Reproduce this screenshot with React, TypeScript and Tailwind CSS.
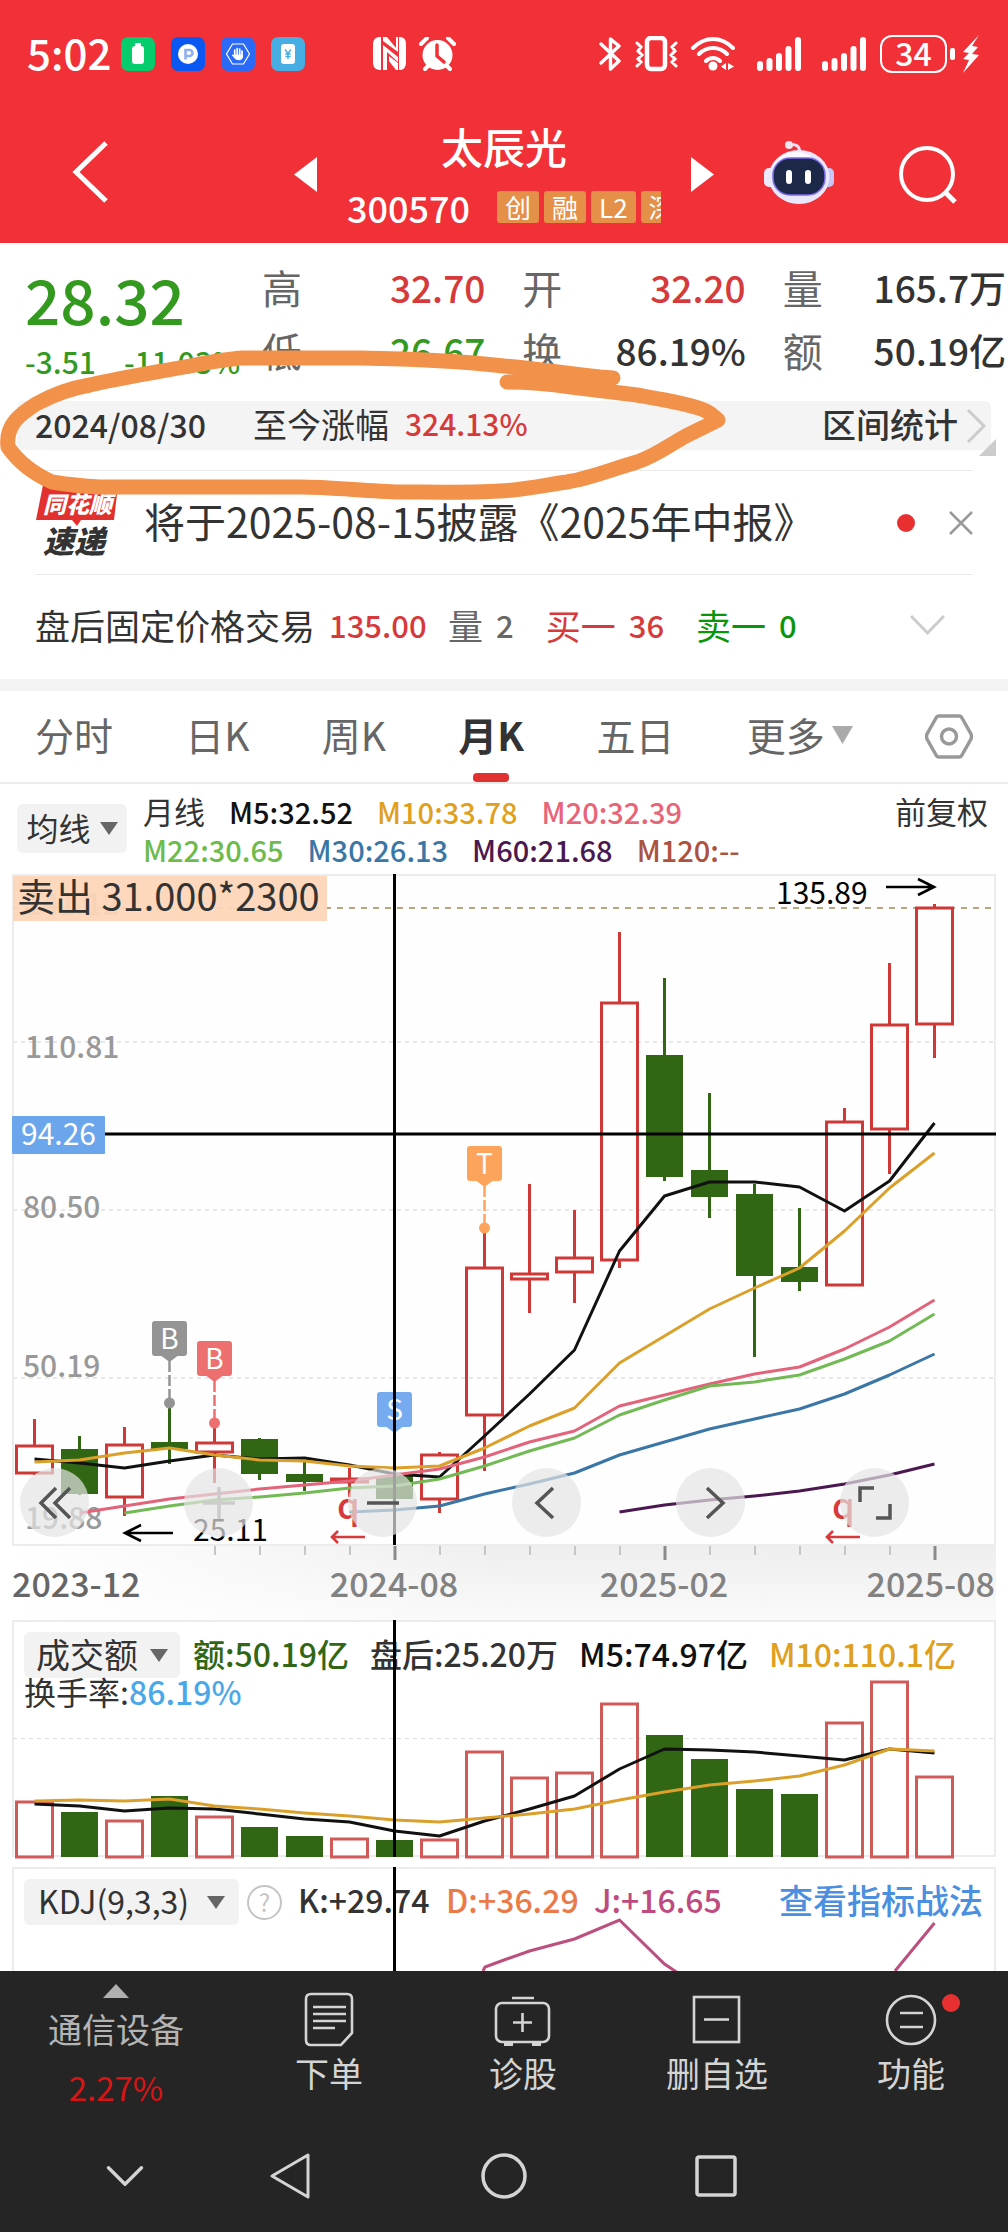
import type { ReactNode } from "react";
import { ChevronDown } from "lucide-react";

const RED = "#ce3836";
const GREEN = "#306614";
const STEP = 45;
const cx = (i: number) => 34.5 + i * STEP;

interface Candle {
  up: boolean;
  high: number;
  top: number;
  bottom: number;
  low: number;
  vol: number;
}

// up, high, body top, body bottom, low, volume top
const rows: [number, number, number, number, number, number][] = [
  [1, 1419, 1446, 1473, 1475, 1802],
  [0, 1436, 1449, 1494, 1495, 1812],
  [1, 1427, 1445, 1497, 1516, 1821],
  [0, 1403, 1442, 1449, 1464, 1796],
  [1, 1423, 1443, 1452, 1483, 1817],
  [0, 1438, 1439, 1474, 1480, 1827],
  [0, 1462, 1474, 1482, 1491, 1836],
  [1, 1468, 1479, 1482, 1497, 1839],
  [0, 1474, 1476, 1499, 1499, 1840],
  [1, 1452, 1455, 1499, 1513, 1840],
  [1, 1228, 1268, 1415, 1471, 1752],
  [1, 1184, 1274, 1279, 1313, 1778],
  [1, 1210, 1258, 1272, 1303, 1773],
  [1, 932, 1003, 1260, 1268, 1704],
  [0, 978, 1055, 1177, 1181, 1735],
  [0, 1093, 1170, 1197, 1218, 1759],
  [0, 1184, 1194, 1276, 1357, 1789],
  [0, 1208, 1267, 1282, 1291, 1794],
  [1, 1108, 1122, 1285, 1285, 1723],
  [1, 963, 1025, 1129, 1174, 1682],
  [1, 904, 908, 1024, 1058, 1777],
];

const candles: Candle[] = rows.map(([up, high, top, bottom, low, vol]) => ({
  up: up === 1,
  high,
  top,
  bottom,
  low,
  vol,
}));

const averages = [
  { color: "#111111", from: 0, ys: [1459, 1463, 1468, 1461, 1455, 1459, 1458, 1465, 1474, 1477, 1436, 1394, 1350, 1251, 1196, 1182, 1182, 1187, 1211, 1181, 1123] },
  { color: "#dba02a", from: 0, ys: [1462, 1460, 1453, 1448, 1455, 1460, 1461, 1466, 1468, 1466, 1448, 1426, 1408, 1363, 1336, 1309, 1288, 1268, 1231, 1188, 1153] },
  { color: "#e2637a", from: 1, ys: [1513, 1506, 1499, 1494, 1489, 1485, 1481, 1475, 1469, 1457, 1442, 1431, 1406, 1395, 1384, 1374, 1367, 1349, 1327, 1300] },
  { color: "#73b955", from: 2, ys: [1513, 1506, 1500, 1497, 1493, 1488, 1486, 1479, 1466, 1451, 1438, 1415, 1400, 1386, 1382, 1375, 1359, 1341, 1314] },
  { color: "#3a76a6", from: 7, ys: [1512, 1510, 1506, 1494, 1484, 1473, 1455, 1442, 1429, 1419, 1409, 1394, 1375, 1354] },
  { color: "#4b1850", from: 13, ys: [1512, 1505, 1500, 1496, 1491, 1484, 1475, 1464] },
];

const volumeAverages = [
  { color: "#111111", from: 0, ys: [1804, 1806, 1811, 1808, 1809, 1814, 1819, 1822, 1831, 1836, 1821, 1809, 1796, 1769, 1749, 1750, 1752, 1756, 1760, 1749, 1753] },
  { color: "#dba02a", from: 0, ys: [1801, 1800, 1801, 1799, 1806, 1809, 1813, 1816, 1820, 1822, 1818, 1814, 1809, 1800, 1792, 1785, 1781, 1776, 1765, 1749, 1751] },
];

const markers = [
  { letter: "B", i: 3, y: 1321, dot: 1403, color: "#949494" },
  { letter: "B", i: 4, y: 1341, dot: 1423, color: "#ee6f6f" },
  { letter: "T", i: 10, y: 1146, dot: 1228, color: "#fda45c" },
  { letter: "S", i: 8, y: 1392, dot: 0, color: "#76abf0" },
];

function Lines({ series }: { series: typeof averages }) {
  return (
    <>
      {series.map((s) => (
        <polyline
          key={s.color}
          points={s.ys.map((y, k) => `${cx(s.from + k)},${y}`).join(" ")}
          fill="none"
          stroke={s.color}
          strokeWidth="3"
          strokeLinejoin="round"
        />
      ))}
    </>
  );
}

function StatusBar() {
  return (
    <div className="flex h-[108px] items-center pr-7 pl-[27px]">
      <span className="w-[94px] pb-1 text-[42px] leading-none font-medium">5:02</span>
      <div className="flex gap-4">
        <svg width="34" height="34" viewBox="0 0 34 34">
          <rect width="34" height="34" rx="7" fill="#05cc6d" />
          <rect x="14" y="6" width="6" height="3" rx="1" fill="#fff" />
          <rect x="11" y="9" width="12" height="18" rx="3" fill="#fff" />
        </svg>
        <svg width="34" height="34" viewBox="0 0 34 34">
          <rect width="34" height="34" rx="7" fill="#0a57f2" />
          <circle cx="17" cy="17" r="10" fill="#fff" />
          <path d="M14.5 22.5V13h4a3 3 0 0 1 0 6h-4" fill="none" stroke="#8fb0ef" strokeWidth="2.6" />
        </svg>
        <svg width="34" height="34" viewBox="0 0 34 34">
          <rect width="34" height="34" rx="7" fill="#2b6af6" />
          <path d="M11.500 7h11l6 10-6 10h-11l-6-10z" fill="none" stroke="#fff" strokeWidth="1.2" />
          <path d="M13.700 20V13M16.200 19V11.500M18.700 19V12M21 20V14" stroke="#fff" strokeWidth="1.700" strokeLinecap="round" />
          <path d="M13 17.500h8.800v2.500c0 2-1.500 3.200-3.800 3.200s-3.500-.7-4.500-2l-2.700-3c.4-.9 1.300-.8 2.200 0z" fill="#fff" />
        </svg>
        <svg width="34" height="34" viewBox="0 0 34 34">
          <rect width="34" height="34" rx="7" fill="#47aee3" />
          <rect x="10" y="7" width="14" height="20" rx="3" fill="#fff" />
          <path d="M14 12.500l3 4 3-4M17 16.500V22M14.300 17h5.400M14.300 19.500h5.400" fill="none" stroke="#47aee3" strokeWidth="1.400" />
        </svg>
      </div>
      <svg className="ml-[68px]" width="34" height="34" viewBox="0 0 34 34" fill="#fff">
        <path d="M7 0h1v33c-5 0-8-2-8-8V8C0 2 3 0 7 0zM27 33h-1V0c5 0 7 2 7 8v17c0 6-3 8-6 8z" />
        <path d="M10 0h4l9 11V0h2v15L10 4zM10 8l15 12v5L14 15v18h-4zM16 19l9 7v7h-2l-7-9z" />
      </svg>
      <svg className="ml-3" width="37" height="35" viewBox="0 0 37 35">
        <circle cx="18.500" cy="18" r="15" fill="#fff" />
        <path d="M2 7l6-6M35 7l-6-6M6 32l4-4M31 32l-4-4" stroke="#fff" strokeWidth="4" strokeLinecap="round" />
        <path d="M18 8v11l7 6" fill="none" stroke="#f13038" strokeWidth="3.500" strokeLinecap="round" />
      </svg>

      <svg className="ml-auto" width="22" height="36" viewBox="0 0 22 36" fill="none" stroke="#fff" strokeWidth="3.400" strokeLinejoin="round" strokeLinecap="round">
        <path d="M2 8l18 17-8.500 8V3L20 10 2 27" />
      </svg>
      <svg className="ml-[14px]" width="43" height="36" viewBox="0 0 43 36" fill="none" stroke="#fff" strokeLinecap="round">
        <rect x="12" y="2" width="18" height="31" rx="4" strokeWidth="4.500" />
        <path d="M2 7l4 4-3 4 4 4-4 4 3 3-4 4M41 7l-4 4 3 4-4 4 4 4-3 3 4 4" strokeWidth="3" />
      </svg>
      <svg className="ml-[13px]" width="45" height="36" viewBox="0 0 45 36" fill="none" stroke="#fff" strokeWidth="4" strokeLinecap="round">
        <path d="M2 12c12-12 28-12 40 0M8 18c8-8 20-8 28 0M15 25c4-4 10-4 14 0" />
        <circle cx="22" cy="30" r="4.500" fill="#fff" stroke="none" />
        <path d="M35 27v7l-5-3.500zM37 27v7l6-3.500z" fill="#fff" stroke="none" />
      </svg>
      {[0, 1].map((n) => (
        <svg key={n} className="ml-[21px]" width="44" height="36" viewBox="0 0 44 36" stroke="#fff" strokeWidth="6" strokeLinecap="round">
          <path d="M3 28v4M12.500 25v7M22 20v12M31.500 13v19M41 4v28" />
        </svg>
      ))}
      <div className="ml-[14px] flex h-[38px] w-[67px] items-center justify-center rounded-xl border-2 border-white pb-1 text-[32px] leading-none font-medium">
        34
      </div>
      <svg className="ml-[2px]" width="31" height="38" viewBox="0 0 31 38" fill="#fff">
        <rect x="1" y="13" width="5" height="12" rx="2" />
        <path d="M30 0L14 17l6 1-6 6 6 1-6 13 16-18-7-1 6-7-6-1z" />
      </svg>
    </div>
  );
}

function Robot() {
  return (
    <svg width="70" height="64" viewBox="0 0 70 64">
      <path d="M24 5q12-3 12 9" fill="none" stroke="#e9dff5" strokeWidth="3" />
      <circle cx="25" cy="5" r="4" fill="#f3e6f2" />
      <rect x="0" y="28" width="12" height="19" rx="5" fill="#efeafa" />
      <rect x="58" y="28" width="12" height="19" rx="5" fill="#c9c5f5" />
      <ellipse cx="35" cy="37" rx="30.500" ry="27" fill="#e9e7fb" />
      <ellipse cx="32" cy="29" rx="23" ry="17" fill="#fbf7ff" />
      <rect x="9" y="18" width="52" height="37" rx="17" fill="#1c2848" stroke="#7d6bea" strokeWidth="1.500" />
      <rect x="22" y="30" width="6" height="14" rx="3" fill="#fff" />
      <rect x="41" y="30" width="6" height="14" rx="3" fill="#fff" />
    </svg>
  );
}

function TitleBar() {
  return (
    <div className="flex items-center pt-[7px] pb-[6px]">
      <button aria-label="返回" className="mb-2 ml-[72px]">
        <svg width="36" height="62" viewBox="0 0 36 62" fill="none" stroke="#fff" strokeWidth="5">
          <path d="M34 2L4 31l30 29" />
        </svg>
      </button>
      <button aria-label="上一只" className="mb-1 ml-[186px]">
        <svg width="23" height="35" viewBox="0 0 23 35" fill="#fff">
          <path d="M23 0v35L0 17.500z" />
        </svg>
      </button>
      <div className="flex flex-1 flex-col items-center">
        <h1 className="text-[42px] leading-[62px] font-medium">太辰光</h1>
        <div className="flex w-[314px] items-center overflow-hidden">
          <span className="w-[150px] shrink-0 text-[36px] leading-[60px] font-medium">300570</span>
          <div className="flex shrink-0 gap-[5px] text-[26px] leading-8">
            {["创", "融", "L2", "深"].map((tag) => (
              <span key={tag} className="rounded-[3px] bg-[#e59048] px-2">
                {tag}
              </span>
            ))}
          </div>
        </div>
      </div>
      <button aria-label="下一只" className="mb-1">
        <svg width="23" height="35" viewBox="0 0 23 35" fill="#fff">
          <path d="M0 0v35l23-17.500z" />
        </svg>
      </button>
      <button aria-label="智能助手" className="mb-2 ml-[50px]">
        <Robot />
      </button>
      <button aria-label="搜索" className="mr-[50px] mb-1 ml-16">
        <svg width="60" height="60" viewBox="0 0 60 60" fill="none" stroke="#fff" strokeWidth="4">
          <circle cx="29" cy="30" r="26" />
          <path d="M47 48l10 10" strokeWidth="5" />
        </svg>
      </button>
    </div>
  );
}

const stats = [
  { label: "高", value: "32.70", tone: "text-[#d63a3a]" },
  { label: "开", value: "32.20", tone: "text-[#d63a3a]" },
  { label: "量", value: "165.7万", tone: "text-[#333333]" },
  { label: "低", value: "26.67", tone: "text-[#339a1f]" },
  { label: "换", value: "86.19%", tone: "text-[#333333]" },
  { label: "额", value: "50.19亿", tone: "text-[#333333]" },
];

function Quote() {
  return (
    <section className="relative pt-[13px]">
      <div className="flex">
        <div className="w-[262px] shrink-0 pl-[25px] font-medium text-[#339a1f]">
          <div className="text-[62px] leading-[84px]">28.32</div>
          <div className="flex gap-7 text-[30px] leading-[42px] whitespace-nowrap">
            <span>-3.51</span>
            <span>-11.03%</span>
          </div>
        </div>
        <dl className="grid flex-1 grid-cols-3 gap-x-[37px] pr-[2px]">
          {stats.map((s) => (
            <div key={s.label} className="flex justify-between leading-[63px] whitespace-nowrap">
              <dt className="text-[40px] text-[#666666]">{s.label}</dt>
              <dd className={`text-[37px] font-medium ${s.tone}`}>{s.value}</dd>
            </div>
          ))}
        </dl>
      </div>

      <div className="relative mt-[19px] mr-[17px] ml-[17px] flex h-[49px] items-center rounded-md bg-[#f4f4f4] pr-1 pb-1 pl-[18px] text-[#333333]">
        <span className="w-[218px] text-[32px] font-medium">2024/08/30</span>
        <span className="text-[34px]">至今涨幅</span>
        <span className="ml-4 text-[30px] font-medium text-[#d63a3a]">324.13%</span>
        <button className="ml-auto flex items-center gap-2 text-[34px] font-medium">
          区间统计
          <svg className="mt-1" width="21" height="36" viewBox="0 0 21 36" fill="none" stroke="#cccccc" strokeWidth="3">
            <path d="M2 2l16 16L2 34" />
          </svg>
        </button>
        <svg className="absolute right-[-5px] -bottom-[6px]" width="17" height="17" viewBox="0 0 17 17" fill="#cccccc">
          <path d="M17 0v17H0z" />
        </svg>
      </div>

      {/* Hand-drawn highlight */}
      <svg className="pointer-events-none absolute top-0 left-0 z-10 w-full overflow-visible" viewBox="0 243 1008 260" fill="none" stroke="#f2924a" strokeWidth="15" strokeLinecap="round" strokeLinejoin="round">
        <path d="M507 382C530 382 550 384 571 387L637 395C665 400 695 405 706 411C714 415 716 419 718 420C705 427 695 431 684 437C668 446 655 456 637 462C612 469 592 478 567 482C545 485 524 490 500 491C466 493 430 492 400 492C365 491 330 487 300 487L100 487C80 486 70 485 52 482C32 473 17 460 8 447C5 424 22 413 36 404C56 393 72 388 90 385C124 377 158 372 190 366C210 362 226 359 243 358L360 358C420 359 460 361 504 366C540 369 570 374 600 377L613 378" />
      </svg>
    </section>
  );
}

function News() {
  return (
    <section className="mx-[35px] mt-5 flex h-[105px] items-center border-y border-[#ebebeb]">
      <svg width="84" height="76" viewBox="0 0 84 76" fontFamily='"Noto Sans CJK SC", sans-serif' fontWeight="900" fontStyle="italic">
        <path d="M8 0h75l-4 35H46l-4 6-5-6H1z" fill="#e2302f" />
        <text x="8" y="28" fontSize="23" fill="#fff">同花顺</text>
        <text x="8" y="68" fontSize="31" fill="#333">速递</text>
      </svg>
      <a href="#news" className="mb-1 ml-[25px] text-[41px] whitespace-nowrap text-[#333333]">
        将于2025-08-15披露《2025年中报》
      </a>
      <span className="ml-auto h-[18px] w-[18px] rounded-full bg-[#e83030]" />
      <button aria-label="关闭" className="ml-[34px]">
        <svg width="24" height="24" viewBox="0 0 24 24" fill="none" stroke="#999999" strokeWidth="2.500">
          <path d="M1 1l22 22M23 1L1 23" />
        </svg>
      </button>
    </section>
  );
}

function AfterHours() {
  return (
    <section className="flex h-[104px] items-center pr-[63px] pb-1 pl-[35px] text-[35px] whitespace-nowrap">
      <span className="text-[#333333]">盘后固定价格交易</span>
      <span className="ml-[14px] w-[119px] text-[31px] font-medium text-[#d63a3a]">135.00</span>
      <span className="flex items-center gap-[13px] text-[#666666]">
        量<span className="text-[31px] font-medium">2</span>
      </span>
      <span className="ml-8 flex items-center gap-[13px] text-[#d63a3a]">
        买一<span className="text-[31px] font-medium">36</span>
      </span>
      <span className="ml-8 flex items-center gap-[13px] text-[#0a960a]">
        卖一<span className="text-[31px] font-medium">0</span>
      </span>
      <button aria-label="展开" className="ml-auto">
        <svg width="35" height="20" viewBox="0 0 35 20" fill="none" stroke="#cccccc" strokeWidth="3">
          <path d="M1 1l16.500 17L34 1" />
        </svg>
      </button>
    </section>
  );
}

function Triangle({ color }: { color: string }) {
  return (
    <svg className="mt-1" width="18" height="13" viewBox="0 0 18 13" fill={color}>
      <path d="M0 0h18l-9 13z" />
    </svg>
  );
}

function PeriodTabs() {
  return (
    <nav className="flex h-[93px] items-center justify-between border-b-2 border-[#ebebeb] px-[35px] text-[39px] text-[#666666]">
      {["分时", "日K", "周K", "月K", "五日"].map((tab) => (
        <button
          key={tab}
          className={
            tab === "月K"
              ? "relative h-full pb-1 font-bold text-[#333333]"
              : "h-full pb-1"
          }
        >
          {tab}
          {tab === "月K" && (
            <span className="absolute bottom-0 left-1/2 h-[9px] w-9 -translate-x-1/2 rounded bg-[#e03030]" />
          )}
        </button>
      ))}
      <button className="flex items-center gap-[7px] pb-1">
        更多
        <svg width="21" height="18" viewBox="0 0 21 18" fill="#aaaaaa">
          <path d="M0 0h21L10.500 18z" />
        </svg>
      </button>
      <button aria-label="设置">
        <svg width="48" height="45" viewBox="0 0 48 45" fill="none" stroke="#999999" strokeWidth="3.500" strokeLinejoin="round">
          <path d="M14 2h20q2 0 3 2l9 16q1 2.500 0 5l-9 16q-1 2-3 2H14q-2 0-3-2L2 25q-1-2.500 0-5l9-16q1-2 3-2z" />
          <circle cx="24" cy="22.500" r="7.500" />
        </svg>
      </button>
    </nav>
  );
}

function MovingAverages() {
  return (
    <section className="flex h-[90px] items-start pt-2 pr-5 pl-[17px] whitespace-nowrap">
      <button className="mt-3 flex h-[49px] w-[110px] items-center justify-center gap-[9px] rounded-md bg-[#f2f2f2] pb-1 text-[32px] text-[#333333]">
        均线
        <Triangle color="#666666" />
      </button>
      <div className="ml-4 text-[29px] leading-[38px] font-medium">
        <div className="flex gap-6">
          <span className="text-[31px] font-normal text-[#333333]">月线</span>
          <span className="text-[#111111]">M5:32.52</span>
          <span className="text-[#dfa020]">M10:33.78</span>
          <span className="text-[#e86478]">M20:32.39</span>
        </div>
        <div className="flex gap-6">
          <span className="text-[#6dbb4c]">M22:30.65</span>
          <span className="text-[#3a76a6]">M30:26.13</span>
          <span className="text-[#4b1850]">M60:21.68</span>
          <span className="text-[#ad5140]">M120:--</span>
        </div>
      </div>
      <button className="ml-auto text-[31px] leading-[38px] text-[#333333]">前复权</button>
    </section>
  );
}

function Dividend({ x }: { x: number }) {
  return (
    <g>
      <text x={x} y="1519" fontSize="36" fontWeight="500" fill="#d8393a">q</text>
      <path d={`M${x + 28} 1537h-33M${x + 1} 1531l-6 6 6 6`} fill="none" stroke="#d8393a" strokeWidth="2.600" />
    </g>
  );
}

function ToolButton({ label, faded, children }: { label: string; faded?: boolean; children: ReactNode }) {
  return (
    <button aria-label={label} className="flex h-[69px] w-[69px] items-center justify-center rounded-full bg-[#e4e4e4]/70">
      <svg width="34" height="34" viewBox="0 0 34 34" fill="none" stroke={faded ? "#cccccc" : "#555555"} strokeWidth="3.500">
        {children}
      </svg>
    </button>
  );
}

function MainChart() {
  return (
    <section className="relative">
      <svg className="block w-full" viewBox="0 874 1008 746" fontFamily='"Noto Sans CJK SC", sans-serif'>
        <defs>
          <linearGradient id="axis" x1="0" y1="0" x2="0" y2="1">
            <stop offset="0" stopColor="#eeeeee" />
            <stop offset="1" stopColor="#fafafa" />
          </linearGradient>
          <linearGradient id="fade" x1="0" y1="0" x2="1" y2="0">
            <stop offset="0" stopColor="#ffffff" />
            <stop offset="0.500" stopColor="#ffffff" stopOpacity="0" />
          </linearGradient>
        </defs>
        <rect x="12" y="1545" width="984" height="76" fill="url(#axis)" />
        <rect x="12" y="1545" width="984" height="76" fill="url(#fade)" />
        <rect x="13" y="875" width="982" height="670" fill="#fefefe" stroke="#ececec" strokeWidth="2" />

        {[1042, 1210, 1378].map((y) => (
          <path key={y} d={`M13 ${y}H994`} stroke="#e8e8e8" strokeWidth="2" strokeDasharray="4 4" />
        ))}
        <path d="M13 908H994" stroke="#b9a57f" strokeWidth="2" strokeDasharray="6 6" />

        <g fontSize="30" fontWeight="500" fill="#999999">
          <text x="25" y="1058">110.81</text>
          <text x="23" y="1218">80.50</text>
          <text x="23" y="1377">50.19</text>
          <text x="25" y="1529">19.88</text>
          <text x="25" y="915">141.12</text>
        </g>

        {candles.map((c, i) => {
          const color = c.up ? RED : GREEN;
          return (
            <g key={i}>
              <path d={`M${cx(i)} ${c.high}V${c.top}M${cx(i)} ${c.bottom}V${c.low}`} stroke={color} strokeWidth="3" />
              {c.up ? (
                <rect x={cx(i) - 18} y={c.top} width="36" height={c.bottom - c.top} fill="none" stroke={color} strokeWidth="3" />
              ) : (
                <rect x={cx(i) - 18.5} y={c.top} width="37" height={c.bottom - c.top} fill={color} />
              )}
            </g>
          );
        })}

        <Lines series={averages} />

        {/* Trade markers */}
        {markers.map((m) => (
          <g key={`${m.letter}${m.i}`}>
            {m.dot > 0 && (
              <>
                <path d={`M${cx(m.i)} ${m.y + 40}V${m.dot}`} stroke={m.color} strokeWidth="2.500" strokeDasharray="11 3" />
                <circle cx={cx(m.i)} cy={m.dot} r="5.500" fill={m.color} />
              </>
            )}
            <rect x={cx(m.i) - 17.5} y={m.y} width="35" height="35" rx="3" fill={m.color} />
            <path d={`M${cx(m.i) - 8} ${m.y + 35}h16l-8 6z`} fill={m.color} />
            <text x={cx(m.i)} y={m.y + 28} fontSize="28" textAnchor="middle" fill="#fff">{m.letter}</text>
          </g>
        ))}
        <Dividend x={337} />
        <Dividend x={832} />

        <path d="M394.500 874V1545M12 1134H996" stroke="#000" strokeWidth="3" />

        <rect x="13" y="876" width="314" height="45" fill="#fdd6b8" fillOpacity="0.940" />
        <text x="17" y="911" fontSize="38" fill="#333">卖出 31.000*2300</text>
        <rect x="12" y="1116" width="93" height="38" rx="1" fill="#6ba5ec" />
        <text x="21" y="1145" fontSize="30" fill="#fff">94.26</text>

        <g fontSize="30" fill="#000">
          <text x="776" y="904">135.89</text>
          <text x="193" y="1541">25.11</text>
        </g>
        <path d="M886 887H934M918 879l16 8-16 8M173 1533H125M141 1525l-16 8 16 8" fill="none" stroke="#000" strokeWidth="2.600" />

        {/* Date axis */}
        {candles.map((_, i) => {
          if (i < 4) return null;
          const major = i % 6 === 2;
          return (
            <path
              key={i}
              d={`M${cx(i) + 0.5} 1546v${major ? 14 : 9}`}
              stroke={major ? "#8a8a8a" : "#c6c6c6"}
              strokeWidth={major ? 3 : 2}
            />
          );
        })}
        <g fontSize="34" fontWeight="500" fill="#828282">
          <text x="12" y="1597" fill="#666666">2023-12</text>
          <text x="394" y="1597" textAnchor="middle">2024-08</text>
          <text x="664" y="1597" textAnchor="middle">2025-02</text>
          <text x="995" y="1597" textAnchor="end">2025-08</text>
        </g>
      </svg>

      <div className="absolute right-[99px] bottom-[83px] left-5 flex justify-between">
        <ToolButton label="最早">
          <path d="M18 2L3 17l15 15M32 2L17 17l15 15" />
        </ToolButton>
        <ToolButton label="放大" faded>
          <path d="M17 1v32M1 17h32" />
        </ToolButton>
        <ToolButton label="缩小">
          <path d="M1 17h32" />
        </ToolButton>
        <ToolButton label="向左">
          <path d="M23 2L7 17l16 15" />
        </ToolButton>
        <ToolButton label="向右">
          <path d="M13 2l16 15-16 15" />
        </ToolButton>
        <ToolButton label="全屏">
          <path d="M2 16V2h14M32 18v14H18" />
        </ToolButton>
      </div>
    </section>
  );
}

function VolumeChart() {
  return (
    <section className="grid">
      <div className="px-6 pt-3 text-[32px] font-medium whitespace-nowrap [grid-area:1/1]">
        <div className="flex h-[46px] items-center gap-[21px]">
          <button className="-mr-2 flex h-[46px] items-center gap-3 rounded-md bg-[#f2f2f2] px-3 pb-1 text-[34px] font-normal text-[#333333]">
            成交额
            <Triangle color="#666666" />
          </button>
          <span className="pb-1 text-[#306614]">额:50.19亿</span>
          <span className="pb-1 text-[#333333]">盘后:25.20万</span>
          <span className="pb-1 text-[#111111]">M5:74.97亿</span>
          <span className="pb-1 text-[#dfa020]">M10:110.1亿</span>
        </div>
        <div className="leading-[26px] font-normal text-[#333333]">
          换手率:<span className="font-medium text-[#4aa8e8]">86.19%</span>
        </div>
      </div>
      <svg className="pointer-events-none block w-full [grid-area:1/1]" viewBox="0 1620 1008 247">
        <rect x="13" y="1621" width="982" height="235" fill="none" stroke="#ececec" strokeWidth="2" />
        <path d="M13 1738.500H994" stroke="#dcdcdc" strokeWidth="1" strokeDasharray="4 4" />
        {candles.map((c, i) =>
          c.up ? (
            <rect key={i} x={cx(i) - 18} y={c.vol} width="36" height={1857 - c.vol} fill="none" stroke="#cf5a58" strokeWidth="3" />
          ) : (
            <rect key={i} x={cx(i) - 18.5} y={c.vol} width="37" height={1857 - c.vol} fill={GREEN} />
          )
        )}
        <Lines series={volumeAverages} />
        <path d="M394.500 1620V1857" stroke="#000" strokeWidth="3" />
      </svg>
    </section>
  );
}

function KdjChart() {
  return (
    <section className="grid">
      <div className="flex h-[58px] items-center self-start pt-3 pr-[25px] pl-6 text-[32px] font-medium whitespace-nowrap [grid-area:1/1]">
        <button className="flex h-[46px] w-[215px] items-center justify-between rounded-md bg-[#f2f2f2] px-[14px] pb-1 font-normal text-[#333333]">
          KDJ(9,3,3)
          <Triangle color="#666666" />
        </button>
        <button aria-label="说明" className="ml-2 h-[35px] w-[35px] rounded-full border-2 border-[#c4c4c4] text-[24px] leading-[28px] font-normal text-[#c4c4c4]">
          ?
        </button>
        <span className="ml-[16px] w-[148px] pb-[6px] text-[#333333]">K:+29.74</span>
        <span className="w-[148px] pb-[6px] text-[#ea7a48]">D:+36.29</span>
        <span className="pb-[6px] text-[#bf4a80]">J:+16.65</span>
        <a href="#kdj" className="ml-auto pb-[6px] text-[34px] text-[#4a8fe0]">查看指标战法</a>
      </div>
      <svg className="pointer-events-none block w-full [grid-area:1/1]" viewBox="0 1867 1008 104">
        <path d="M13 1971V1868H995V1971" fill="none" stroke="#ececec" strokeWidth="2" />
        <path d="M483 1971l2-4 19-7 25.500-9 45-12 45-19 45 44 12 8M895 1971l39.500-48" fill="none" stroke="#bb4f7e" strokeWidth="3" />
        <path d="M394.500 1867V1971" stroke="#000" strokeWidth="3" />
      </svg>
    </section>
  );
}

function Action({ label, children }: { label: string; children: ReactNode }) {
  return (
    <button className="flex flex-1 flex-col items-center pt-[21px]">
      <svg width="58" height="56" viewBox="0 0 58 56" fill="none" stroke="#d4d4d4" strokeWidth="2.600" className="overflow-visible">
        {children}
      </svg>
      <span className="mt-[2px] text-[34px] leading-[46px]">{label}</span>
    </button>
  );
}

function BottomBar() {
  return (
    <footer className="bg-[#252525] text-[#d4d4d4]">
      <div className="flex h-[145px]">
        <button className="flex w-[232px] flex-col items-center pt-[13px]">
          <svg width="26" height="14" viewBox="0 0 26 14" fill="#b0b0b0">
            <path d="M13 0l13 14H0z" />
          </svg>
          <span className="mt-2 text-[34px] leading-[46px] text-[#b4b4b4]">通信设备</span>
          <span className="mt-4 text-[33px] leading-[38px] text-[#d91414]">2.27%</span>
        </button>
        <Action label="下单">
          <path d="M11 2h36q5 0 5 5v34l-11 12H11q-5 0-5-5V7q0-5 5-5zM13 15h33M13 22h33M13 29h33M13 36h22" />
        </Action>
        <Action label="诊股">
          <rect x="2" y="11" width="53" height="39" rx="6" />
          <path d="M18 6h22M28.500 21v19M19 30.500h19" />
          <path d="M10 52h9M38 52h9" strokeWidth="4" />
        </Action>
        <Action label="删自选">
          <rect x="6" y="5" width="45" height="45" />
          <path d="M16 27.500h25" />
        </Action>
        <Action label="功能">
          <circle cx="29" cy="28" r="24" />
          <path d="M18 21h23M18 35h23" />
          <circle cx="69" cy="11" r="9" fill="#e83030" stroke="none" />
        </Action>
      </div>
      <div className="grid h-[116px] grid-cols-[250fr_80fr_347fr_78fr_253fr] items-center justify-items-center pt-1">
        <button aria-label="收起">
          <ChevronDown size={66} strokeWidth={1.25} />
        </button>
        <button aria-label="返回">
          <svg width="42" height="48" viewBox="0 0 42 48" fill="none" stroke="#d4d4d4" strokeWidth="3" strokeLinejoin="round">
            <path d="M39 3v42L3 24z" />
          </svg>
        </button>
        <button aria-label="主页">
          <svg width="48" height="48" viewBox="0 0 48 48" fill="none" stroke="#d4d4d4" strokeWidth="3.500">
            <circle cx="24" cy="24" r="21" />
          </svg>
        </button>
        <button aria-label="最近任务">
          <svg width="42" height="42" viewBox="0 0 42 42" fill="none" stroke="#d4d4d4" strokeWidth="3.500">
            <rect x="2" y="2" width="38" height="38" rx="2" />
          </svg>
        </button>
      </div>
    </footer>
  );
}

export default function App() {
  return (
    <div className="w-full overflow-hidden bg-white font-['Noto_Sans_CJK_SC',sans-serif]">
      <header className="bg-[#f13038] text-white">
        <StatusBar />
        <TitleBar />
      </header>
      <main>
        <Quote />
        <News />
        <AfterHours />
        <div className="h-3 bg-[#f4f4f4]" />
        <PeriodTabs />
        <MovingAverages />
        <MainChart />
        <VolumeChart />
        <KdjChart />
      </main>
      <BottomBar />
    </div>
  );
}
